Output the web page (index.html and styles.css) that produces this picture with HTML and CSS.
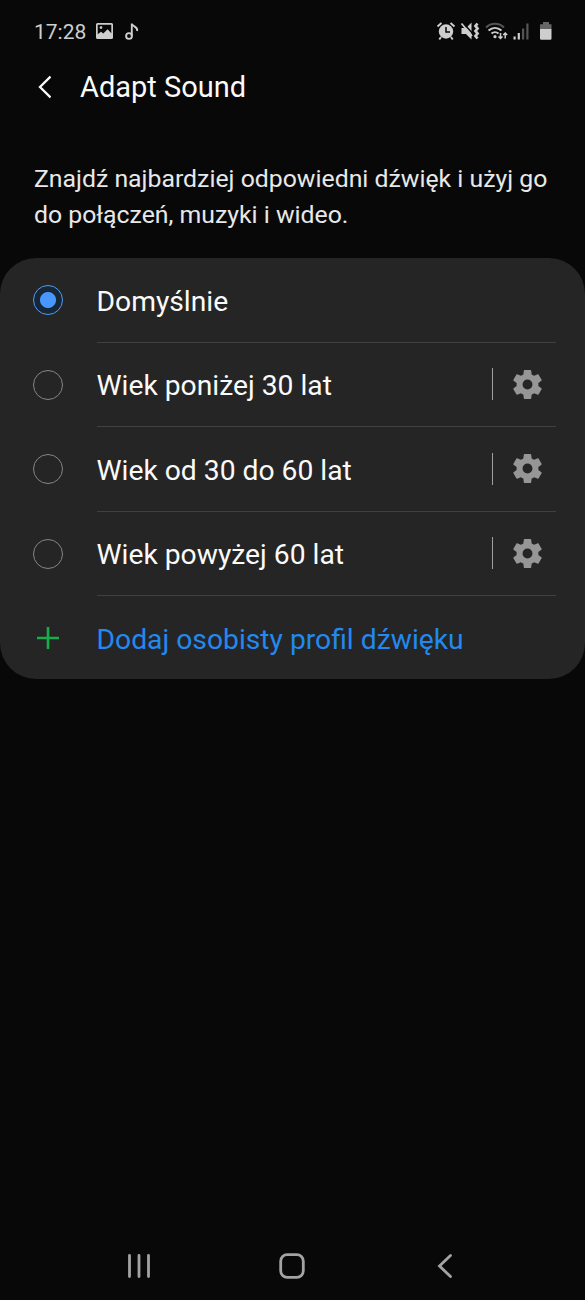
FILE: index.html
```html
<!DOCTYPE html>
<html lang="pl">
<head>
<meta charset="utf-8">
<title>Adapt Sound</title>
<link rel="stylesheet" href="styles.css">
</head>
<body>
<svg class="defs" width="0" height="0">
  <symbol id="gear" viewBox="0 0 24 24"><path fill-rule="evenodd" d="M19.43 12.98c.04-.32.07-.64.07-.98s-.03-.66-.07-.98l2.11-1.65c.19-.15.24-.42.12-.64l-2-3.46c-.12-.22-.39-.3-.61-.22l-2.49 1c-.52-.4-1.08-.73-1.69-.98l-.38-2.65A.49.49 0 0 0 14 2h-4c-.25 0-.46.18-.49.42l-.38 2.65c-.61.25-1.17.59-1.69.98l-2.49-1c-.23-.09-.49 0-.61.22l-2 3.46c-.13.22-.07.49.12.64l2.11 1.65c-.04.32-.07.65-.07.98s.03.66.07.98l-2.11 1.65c-.19.15-.24.42-.12.64l2 3.46c.12.22.39.3.61.22l2.49-1c.52.4 1.08.73 1.69.98l.38 2.65c.03.24.24.42.49.42h4c.25 0 .46-.18.49-.42l.38-2.65c.61-.25 1.17-.59 1.69-.98l2.49 1c.23.09.49 0 .61-.22l2-3.46c.12-.22.07-.49-.12-.64zM12 15.4a3.4 3.4 0 1 1 0-6.8 3.4 3.4 0 0 1 0 6.8z"/></symbol>
</svg>
<div class="screen">
  <div class="status">
    <span class="clock">17:28</span>
    <svg class="st-left" width="44" height="20" viewBox="0 0 44 20">
      <path fill-rule="evenodd" d="M1.5 2h14a1.5 1.5 0 0 1 1.5 1.5v13a1.5 1.5 0 0 1-1.5 1.5h-14A1.5 1.5 0 0 1 0 16.5v-13A1.5 1.5 0 0 1 1.5 2zM1.7 3.7v9.6l3.3-2.6 2.300 1.800 4.300-4.300 3.700 4V3.700zM5 5.200a1.400 1.400 0 1 1 0 2.800 1.400 1.400 0 0 1 0-2.800z"/>
      <g fill="none" stroke="currentColor" stroke-width="1.900"><circle cx="33" cy="15" r="2.900"/><path d="M35.800 15V2.500c.3 3.200 6.500 3 5.300 7.500"/></g>
    </svg>
    <svg class="st-right" width="118" height="20" viewBox="0 0 118 20">
      <circle cx="10" cy="10.500" r="7.200"/>
      <path d="M5 16l-1.700 2.500M15 16l1.700 2.500M1.500 5.500L5.500 2M18.500 5.500L14.500 2" fill="none" stroke="currentColor" stroke-width="1.900"/>
      <path d="M10 6v5h4" fill="none" stroke="#080808" stroke-width="1.500"/>
      <path d="M25.500 7H30l5.500-5.500v17L30 13h-4.500z"/>
      <path d="M27 1.500l10 11.500" stroke="#080808" stroke-width="1.500"/>
      <path d="M25.500 2.500l10.500 12.500" stroke="currentColor" stroke-width="1.800"/>
      <path d="M41.500 2.500l-2 2.500 2 2.500-2 2.500 2 2.500-2 2.500 2 2.500" fill="none" stroke="currentColor" stroke-width="2.800"/>
      <g fill="none" stroke-width="2"><path d="M50 6.500c5-5 13-5 18 0" stroke="#555"/><path d="M52.500 9.500c4-3.500 9-3.500 13 0M55.500 12.500c2-1.800 5-1.800 7 0" stroke="currentColor"/></g>
      <circle cx="59" cy="15.700" r="1.600"/>
      <path d="M64.500 12v5.500m-2-2l2 2 2-2M69.200 17.500V12m-2 2l2-2 2 2" fill="none" stroke="currentColor" stroke-width="1.500"/>
      <path d="M77.500 15.500h2.200v3h-2.200zM81.700 12h2.200v6.500h-2.200z"/>
      <path fill="#555" d="M86 7.500h2.200v11H86zM90.300 2.500h2.200v16h-2.200z"/>
      <path fill="#666" d="M107 1h6v2.200h2.500V8H104V3.200h3z"/>
      <path d="M104 8h11.500v9.500a1.200 1.200 0 0 1-1.200 1.200h-9.100a1.200 1.200 0 0 1-1.200-1.200z"/>
    </svg>
  </div>
  <header class="header">
    <svg class="back" width="14" height="24" viewBox="0 0 14 24"><path d="M13.500 1.500L3 12l10.500 10.500" fill="none" stroke="currentColor" stroke-width="2.300"/></svg>
    <h1 class="title">Adapt Sound</h1>
  </header>
  <p class="intro">Znajdź najbardziej odpowiedni dźwięk i użyj go<br>do połączeń, muzyki i wideo.</p>
  <main class="card">
    <div class="row"><span class="radio selected"></span><div class="content"><span class="label">Domyślnie</span></div></div>
    <div class="row"><span class="radio"></span><div class="content"><span class="label">Wiek poniżej 30 lat</span><span class="bar"></span><svg class="gear"><use href="#gear"/></svg></div></div>
    <div class="row"><span class="radio"></span><div class="content"><span class="label">Wiek od 30 do 60 lat</span><span class="bar"></span><svg class="gear"><use href="#gear"/></svg></div></div>
    <div class="row"><span class="radio"></span><div class="content"><span class="label">Wiek powyżej 60 lat</span><span class="bar"></span><svg class="gear"><use href="#gear"/></svg></div></div>
    <div class="row add"><svg class="plus" width="30" height="30" viewBox="0 0 30 30"><path d="M15 4v22M4 15h22" stroke="currentColor" stroke-width="2.600"/></svg><div class="content"><span class="label">Dodaj osobisty profil dźwięku</span></div></div>
  </main>
  <nav class="nav">
    <svg width="24" height="26" viewBox="0 0 24 26"><path d="M2.500 2.500v21M12 2.500v21M21.500 2.500v21"/></svg>
    <svg width="26" height="26" viewBox="0 0 26 26"><rect x="1.700" y="1.700" width="22.600" height="22.600" rx="6.500"/></svg>
    <svg width="16" height="26" viewBox="0 0 16 26"><path d="M13.500 2.500L2.500 13l11 10.500"/></svg>
  </nav>
</div>
</body>
</html>
```

FILE: styles.css
```css
body { margin: 0; background: #080808; font-family: Roboto, "Noto Sans", sans-serif; }
.defs { position: absolute; }
svg { display: block; flex: none; fill: currentColor; }
.screen { box-sizing: border-box; width: 585px; height: 1300px; display: flex; flex-direction: column; color: #fafafa; overflow: hidden; }
.status { height: 62px; box-sizing: border-box; padding: 0 29px 0 34px; display: flex; align-items: center; color: #cecece; }
.clock { width: 62px; padding-top: 2px; font-size: 21px; line-height: 24px; }
.st-right { margin-left: auto; margin-right: 2px; }
.header { height: 50px; display: flex; align-items: center; padding-left: 37px; }
.back { margin-right: 29px; margin-top: -1px; }
.title { margin: 0; font-size: 29px; line-height: 36px; font-weight: 400; white-space: nowrap; }
.intro { margin: 49px 0 0 34px; height: 97px; font-size: 24.800px; line-height: 36px; color: #e8e8e8; white-space: nowrap; }
.card { height: 421px; border-radius: 36px; background: #252525; }
.row { display: flex; align-items: center; height: 84.500px; padding: 0 29px 0 33px; }
.radio { box-sizing: border-box; width: 30px; height: 30px; border: 1.500px solid #858585; border-radius: 50%; flex: none; }
.selected { border-color: #4e9df5; background: radial-gradient(circle, #4897ff 0 7.500px, #182738 8.500px); }
.content { box-sizing: border-box; flex: 1; height: 100%; margin-left: 34px; display: flex; align-items: center; border-bottom: 1px solid #404040; }
.label { padding-top: 4px; margin-left: -0.500px; font-size: 28.250px; line-height: 34px; white-space: nowrap; }
.bar { width: 1.500px; height: 32px; margin-left: auto; background: #a0a0a0; }
.gear { width: 35px; height: 35px; margin: 0 11px 0 17px; color: #969696; }
.plus { color: #17ad49; }
.add { height: 83px; }
.add .content { border: 0; color: #2389ee; }
.nav { margin-top: auto; height: 68px; display: flex; align-items: center; padding-left: 127px; color: #a3a3a3; }
.nav svg { fill: none; stroke: currentColor; stroke-width: 2.800; stroke-linecap: round; }
.nav svg + svg { margin-left: 127.500px; }
.nav svg:last-child { margin-left: 132px; }
```
